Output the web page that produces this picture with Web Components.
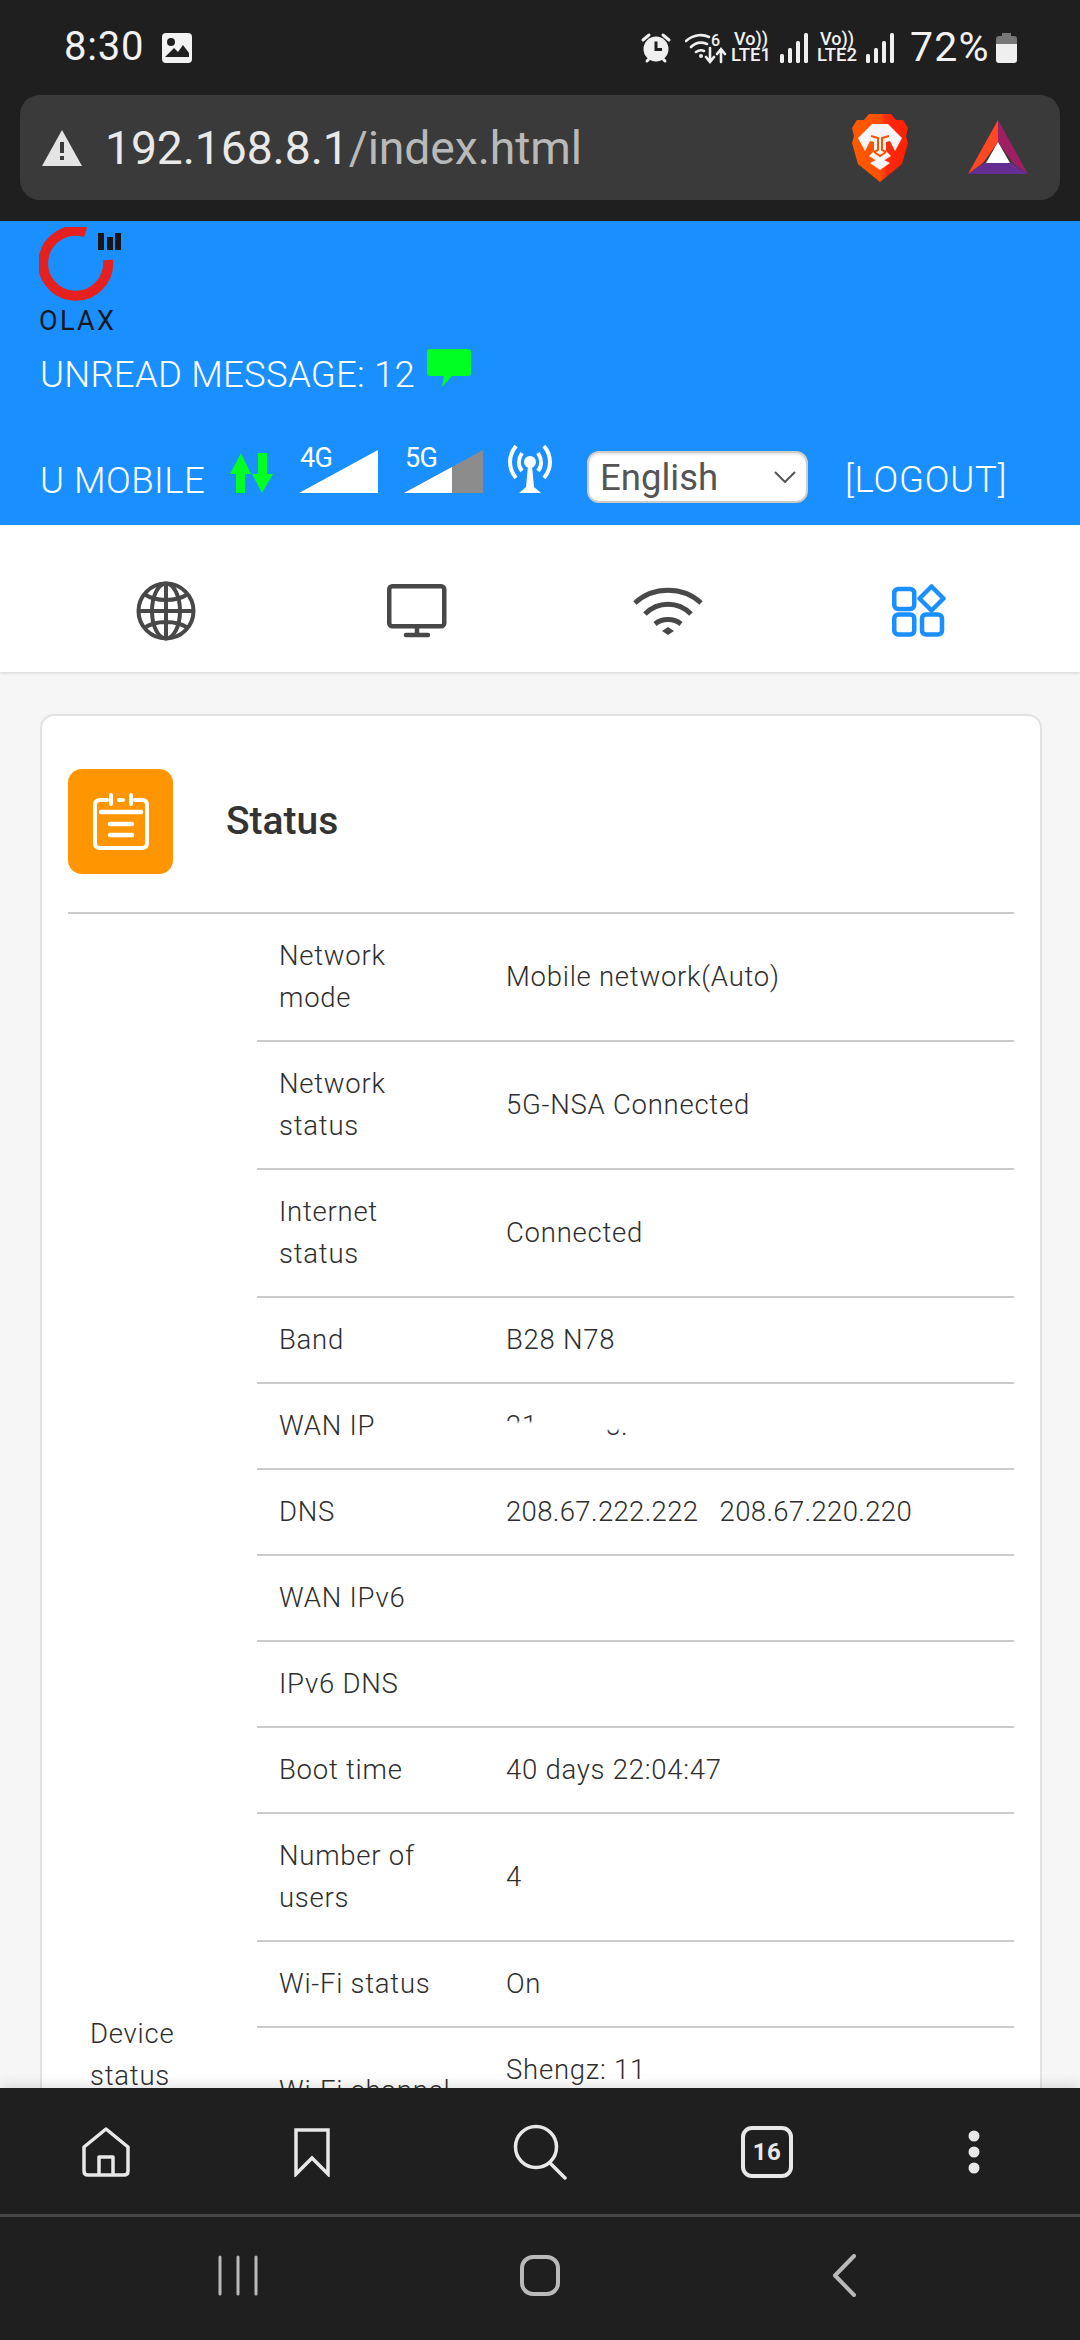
<!DOCTYPE html>
<html lang="en"><head><meta charset="utf-8"><title>Status</title>
<style>
html,body{margin:0;padding:0;width:1080px;height:2340px;overflow:hidden;background:#1f1f1f;font-family:Roboto,"Liberation Sans",sans-serif}
</style></head><body>
<app-shell>
  <browser-chrome></browser-chrome>
  <router-header></router-header>
  <tab-nav></tab-nav>
  <page-body>
    <status-card heading="Status"></status-card>
  </page-body>
  <browser-toolbar></browser-toolbar>
  <android-nav></android-nav>
</app-shell>
<script>
function el(name,html){customElements.define(name,class extends HTMLElement{constructor(){super();this.attachShadow({mode:'open'}).innerHTML=html}})}
el('app-shell','<style>:host{display:flex;flex-direction:column;width:1080px;height:2340px;overflow:hidden}</style><slot></slot>');

el('browser-chrome',`<style>
:host{display:block;height:221px;background:#1f1f1f;color:#f2f2f2;box-sizing:border-box;padding:0 20px;flex:none}
.status{display:flex;align-items:center;height:95px;box-sizing:border-box;padding:0 43px 0 44px}
.time{font-size:40px;letter-spacing:.8px;line-height:46px;margin-top:-2px;font-weight:400;width:98px}
.sp{flex:1}
svg{display:block;flex:none}
.lte{display:flex;flex-direction:column;align-items:center;font-size:18px;line-height:16px;width:38px;font-weight:500;margin-top:-1px}
.lte b{font-weight:500;font-size:18.500px;line-height:17px;white-space:nowrap}
.pct{font-size:41px;font-weight:400;line-height:46px;margin-left:16px;letter-spacing:1.2px;width:78px;white-space:nowrap;margin-top:-2px}
.url{display:flex;align-items:center;height:105px;background:#3a3a3a;border-radius:20px;padding:0 32px 0 22px}
.host{font-size:46.300px;color:#e9e9e9;margin-left:23px;letter-spacing:-.1px;line-height:50px}
.host span{color:#b9b9b9}
</style>
<div class="status">
  <span class="time">8:30</span>
  <svg width="30" height="30" viewBox="0 0 30 30"><rect width="30" height="30" rx="4" fill="#f2f2f2"/><circle cx="9" cy="9" r="4" fill="#1f1f1f"/><path d="M3 24 L12 15 L16 19 L21 12 L27 20 V24 Z" fill="#1f1f1f"/></svg>
  <span class="sp"></span>
  <svg width="32" height="32" viewBox="0 0 32 32"><path d="M3 8 9 3M29 8l-6-5M7 29l3-3M25 29l-3-3" stroke="#efefef" stroke-width="3" fill="none" stroke-linecap="round"/><circle cx="16" cy="17" r="12.500" fill="#efefef"/><path d="M16 9.500v8h6" stroke="#1f1f1f" stroke-width="3" fill="none"/></svg>
  <svg style="margin-left:13px" width="42" height="32" viewBox="0 0 42 32" fill="none" stroke="#efefef" stroke-linecap="round"><path d="M1 9C9 2 18 2 24 5M6 15C11 10 17 10 22 12M11 20c3-2 6-2 8-1" stroke-width="2.600"/><circle cx="16" cy="24" r="2" fill="#efefef" stroke="none"/><path d="M25 16v14m-4-5 4 5 4-5M36 30V17m-4 5 4-5 4 5" stroke-width="2.600"/><text x="26" y="14" font-size="16" font-weight="500" fill="#efefef" stroke="none" font-family="Roboto">6</text></svg>
  <span class="lte" style="margin-left:5px"><span>Vo))</span><b>LTE1</b></span>
  <svg style="margin-left:10px" width="28" height="30" viewBox="0 0 28 30" fill="#efefef"><rect x="0" y="21" width="4" height="9" rx="1.500"/><rect x="8" y="15" width="4" height="15" rx="1.500"/><rect x="16" y="8" width="4" height="22" rx="1.500"/><rect x="24" y="0" width="4" height="30" rx="1.500"/></svg>
  <span class="lte" style="margin-left:8px;width:42px"><span>Vo))</span><b>LTE2</b></span>
  <svg style="margin-left:8px" width="28" height="30" viewBox="0 0 28 30" fill="#efefef"><rect x="0" y="21" width="4" height="9" rx="1.500"/><rect x="8" y="15" width="4" height="15" rx="1.500"/><rect x="16" y="8" width="4" height="22" rx="1.500"/><rect x="24" y="0" width="4" height="30" rx="1.500"/></svg>
  <span class="pct">72%</span>
  <svg style="margin-left:8px" width="21" height="30" viewBox="0 0 21 30"><path d="M6 0h9v3h3q3 0 3 3v5H0V6q0-3 3-3h3z" fill="#777"/><path d="M0 11h21v16q0 3-3 3H3q-3 0-3-3z" fill="#efefef"/></svg>
</div>
<div class="url">
  <svg width="40" height="36" viewBox="0 0 40 36"><path d="M20 0 40 36H0Z" fill="#e4e4e4"/><rect x="18" y="12" width="4" height="11" fill="#3a3a3a"/><rect x="18" y="26" width="4" height="4" fill="#3a3a3a"/></svg>
  <span class="host">192.168.8.1<span>/index.html</span></span>
  <span class="sp"></span>
  <svg width="56" height="68" viewBox="0 0 56 68"><defs><linearGradient id="lg" x1="0" x2="1" y1="0" y2="0"><stop offset="0" stop-color="#ff5a00"/><stop offset=".5" stop-color="#ff5000"/><stop offset=".62" stop-color="#ff2a10"/><stop offset="1" stop-color="#ff2000"/></linearGradient></defs>
    <path d="M17 0H39L44 6H51L56 14 54 22 56 29 50 50 28 68 6 50 0 29 2 22 0 14 5 6H12Z" fill="url(#lg)"/>
    <path d="M20 10H36L50 24 43 37 38 27 34 28 34 37 39 42 28 49 17 42 22 37 22 28 18 27 13 37 6 24Z" fill="#f6f6f6"/>
    <path d="M19 22 26 24 26 36 22 38M37 22 30 24 30 36 34 38M22 38 28 42 34 38" fill="none" stroke="#ff5000" stroke-width="2"/>
    <path d="M18 49 28 44 38 49 28 56Z" fill="#f6f6f6"/>
  </svg>
  <svg style="margin-left:60px" width="60" height="55" viewBox="0 0 60 55"><path d="M30 0 60 54 45 43 30 22Z" fill="#9e1f63"/><path d="M30 0 0 54 15 43 30 22Z" fill="#ff4724"/><path d="M0 54H60L42 42H18Z" fill="#662d91"/><path d="M30 22 42 43H18Z" fill="#fff"/></svg>
</div>`);

el('router-header',`<style>
:host{display:block;height:304px;background:#1a8fff;color:#fff;box-sizing:border-box;padding:6px 0 0 39px;flex:none;font-size:36.500px;font-weight:300}
svg{display:block;flex:none}
.brand{display:block;height:107px;width:90px;position:relative}
.word{display:block;font-size:27px;line-height:26px;color:#17171c;width:80px;letter-spacing:2.300px;font-weight:400;margin-top:1px}
.msg{display:flex;align-items:flex-start;height:56px;margin-top:9px;padding-left:1px}
.msg span{line-height:44px;margin-top:10px;letter-spacing:.25px;white-space:nowrap}
.msg svg{margin:6px 0 0 12px}
.bar{display:flex;align-items:flex-end;margin-top:35px;padding-left:1px;height:62px;position:relative}
.u{line-height:40px;margin-bottom:-5px;letter-spacing:.5px;width:164px;white-space:nowrap}
.sig{position:relative;width:79px;height:43px;margin-left:26px;margin-bottom:3px}
.sig b{position:absolute;left:1px;top:-6px;font-size:27px;line-height:28px;font-weight:400;letter-spacing:-.6px}
.sel{display:flex;align-items:center;justify-content:space-between;width:221px;height:52px;box-sizing:border-box;background:#fff;border:2px solid #ccc;border-radius:12px;box-shadow:inset 0 2px 2px #e8e8e8;margin-left:35px;padding:0 10px 0 11px;color:#555;font-size:36.500px;font-weight:400;margin-bottom:-7px}
.lo{line-height:40px;margin-left:37px;letter-spacing:.8px;margin-bottom:-4px;white-space:nowrap}
</style>
<div class="brand"><svg width="84" height="80" viewBox="0 0 84 80"><path d="M46.600 5.300A32.500 32.500 0 1 0 69 33" fill="none" stroke="#e5201e" stroke-width="10"/><g fill="#1a1414"><rect x="59" y="6" width="6" height="17"/><rect x="68" y="10" width="6" height="13"/><rect x="76" y="6" width="6" height="17"/></g></svg><span class="word">OLAX</span></div>
<div class="msg"><span>UNREAD MESSAGE: 12</span><svg width="44" height="38" viewBox="0 0 44 38"><path d="M3 0H41q3 0 3 3V24q0 3-3 3H25L15 38 17 27H3q-3 0-3-3V3q0-3 3-3Z" fill="#00ff22"/></svg></div>
<div class="bar">
  <span class="u">U MOBILE</span>
  <svg style="margin-left:26px;margin-bottom:3px" width="43" height="40" viewBox="0 0 43 40" fill="#00ff22"><path d="M11 0 21 21H15V40H6V21H0Z"/><path d="M32 40 22 21H28V0H37V21H43Z"/></svg>
  <div class="sig" style="margin-left:26px"><svg width="79" height="43" viewBox="0 0 79 43"><path d="M0 43 79 0V43Z" fill="#fff"/></svg><b>4G</b></div>
  <div class="sig"><svg width="79" height="43" viewBox="0 0 79 43"><path d="M0 43 79 0V43Z" fill="#8c8c8c"/><path d="M0 43 48 17V43Z" fill="#fff"/></svg><b>5G</b></div>
  <svg style="margin-left:25px;margin-bottom:3px" width="44" height="49" viewBox="0 0 44 49" fill="none" stroke="#fff" stroke-width="4"><path d="M8 2C0 12 0 24 8 34M36 2C44 12 44 24 36 34M14 9C10 15 10 22 14 27M30 9C34 15 34 22 30 27"/><circle cx="22" cy="18" r="6" fill="#fff" stroke="none"/><path d="M20 22H24L26 43 33 49H11L18 43Z" fill="#fff" stroke="none"/></svg>
  <div class="sel"><span>English</span><svg width="22" height="12" viewBox="0 0 22 12"><path d="M1 1 11 11 21 1" fill="none" stroke="#555" stroke-width="2"/></svg></div>
  <span class="lo">[LOGOUT]</span>
</div>`);

el('tab-nav',`<style>
:host{display:block;position:relative;z-index:1;flex:none;height:147px;background:#fff;box-shadow:0 1px 3px rgba(0,0,0,.14)}
.r{display:grid;grid-template-columns:repeat(4,251px);justify-items:center;align-items:center;height:100%;box-sizing:border-box;padding:24px 0 0 40px}
svg{display:block}
</style><div class="r">
<svg width="60" height="60" viewBox="0 0 60 60" fill="none" stroke="#484848" stroke-width="4"><circle cx="30" cy="30" r="27.500"/><ellipse cx="30" cy="30" rx="14" ry="27.500"/><path d="M30 2.500V57.500M2.500 30H57.500M8 13C20 21 40 21 52 13M8 47C20 39 40 39 52 47"/></svg>
<svg width="60" height="54" viewBox="0 0 60 54" fill="none" stroke="#484848" stroke-width="4.500" stroke-linejoin="round" stroke-linecap="round"><rect x="2.250" y="2.250" width="55" height="40" rx="3"/><path d="M30 43V50M19 51H41"/></svg>
<svg width="70" height="48" viewBox="0 0 70 48" fill="none" stroke="#484848" stroke-width="5"><path d="M2 16C20-1 50-1 68 16M12 27C25 14 45 14 58 27M22 37C29 31 41 31 48 37"/><path d="M29 44 35 40 41 44 35 48Z" fill="#484848" stroke="none"/></svg>
<svg width="54" height="54" viewBox="0 0 54 54" fill="none" stroke="#1a8fff" stroke-width="4.500" stroke-linejoin="round"><rect x="2.250" y="5" width="20" height="20" rx="4"/><rect x="2.250" y="30.500" width="20" height="20" rx="4"/><rect x="30" y="30.500" width="20" height="20" rx="4"/><path d="M39.500 2.500 51.500 14.500 39.500 26.500 27.500 14.500Z"/></svg>
</div>`);

el('page-body',`<style>:host{display:block;position:relative;flex:1 1 0;min-height:0;overflow:hidden;background:#f6f6f6;padding:42px 38px 0 40px;box-sizing:border-box}</style><slot></slot>`);

customElements.define('status-card',class extends HTMLElement{constructor(){super();
const rows=[['Network<br>mode','Mobile network(Auto)'],['Network<br>status','5G-NSA Connected'],['Internet<br>status','Connected'],['Band','B28 N78'],['WAN IP','<span class="red">21.&nbsp;&nbsp;&nbsp;&nbsp;&nbsp;&nbsp;&nbsp;&nbsp;5.<i></i><u></u></span>'],['DNS','<span class="num">208.67.222.222 &nbsp; 208.67.220.220</span>'],['WAN IPv6',''],['IPv6 DNS',''],['Boot time','40 days 22:04:47'],['Number of<br>users','4'],['Wi-Fi status','On'],['Wi-Fi channel','Shengz: 11<br>&nbsp;']];
const tr=rows.map((r,i)=>`<tr>${i==0?`<th rowspan="${rows.length+1}">Device<br>status</th>`:''}<td class="k">${r[0]}</td><td class="v">${r[1]}</td></tr>`).join('');
this.attachShadow({mode:'open'}).innerHTML=`<style>
:host{display:block;background:#fff;border:2px solid #e2e2e2;border-radius:14px;padding:53px 26px 0 26px;color:#2e2e2e}
.t{display:flex;align-items:center;height:105px;padding-bottom:38px;border-bottom:2px solid #ccc}
.ic{width:105px;height:105px;border-radius:14px;background:#ff9500;display:flex;align-items:center;justify-content:center}
h2{margin:0 0 2px 53px;font-size:39px;font-weight:500;line-height:44px;color:#333}
table{border-collapse:collapse;width:946px;font-size:27.500px;letter-spacing:.75px;table-layout:fixed;font-weight:300}
th{box-sizing:border-box;font-weight:300;text-align:left;padding:0 0 0 22px;line-height:42px;vertical-align:middle}
td{padding:21px 22px;line-height:42px;border-bottom:2px solid #ccc;vertical-align:middle}
.k{box-sizing:border-box}
.f td{height:1039px;padding:0}
.num{letter-spacing:.35px}
.red{position:relative;display:inline-block;white-space:nowrap}
.red i,.red u{position:absolute;background:#fff;filter:blur(1px)}
.red i{left:-3px;top:17px;width:90px;height:25px}
.red u{left:36px;top:0;width:90px;height:25px}
</style>
<div class="t"><div class="ic"><svg width="58" height="58" viewBox="0 0 58 58" fill="none" stroke="#fff" stroke-width="4" stroke-linecap="round"><path d="M15 7H8Q3 7 3 12V50Q3 55 8 55H50Q55 55 55 50V12Q55 7 50 7H43M19 2V11M39 2V11M27 7H31"/><path d="M9 19H49M18 31H40M18 42H40" stroke-width="4.500"/></svg></div><h2>${this.getAttribute('heading')}</h2></div>
<table><colgroup><col style="width:189px"><col style="width:227px"><col></colgroup>${tr}<tr class="f"><td></td><td></td></tr></table>`}});

el('browser-toolbar',`<style>
:host{display:block;position:relative;z-index:2;flex:none;height:126px;background:#1f1f1f;box-shadow:0 -3px 12px rgba(0,0,0,.12);color:#e8e8e8}
.r{display:flex;height:100%;align-items:center;padding:2px 0 0 81px;box-sizing:border-box}
svg{display:block;flex:none}
.tab{flex:none;width:52px;height:52px;margin-left:174px;border:4px solid #e8e8e8;border-radius:11px;box-sizing:border-box;display:flex;align-items:center;justify-content:center;font-size:24px;font-weight:700;letter-spacing:.5px}
</style><div class="r">
<svg width="50" height="50" viewBox="0 0 50 50" fill="none" stroke="#e8e8e8" stroke-width="3.500" stroke-linejoin="round"><path d="M3 20 25 2 47 20V44Q47 48 43 48H7Q3 48 3 44Z"/><path d="M18 48V30H32V48"/></svg>
<svg style="margin-left:163px" width="36" height="50" viewBox="0 0 36 50" fill="none" stroke="#e8e8e8" stroke-width="3.500"><path d="M2 3H34V47L18 31 2 47Z"/></svg>
<svg style="margin-left:183px" width="54" height="56" viewBox="0 0 54 56" fill="none" stroke="#e8e8e8" stroke-width="3.500" stroke-linecap="round"><circle cx="23" cy="23" r="20.500"/><path d="M37 39 52 54"/></svg>
<div class="tab">16</div>
<svg style="margin-left:175px" width="12" height="44" viewBox="0 0 12 44" fill="#e8e8e8"><circle cx="6" cy="6" r="5.500"/><circle cx="6" cy="22" r="5.500"/><circle cx="6" cy="38" r="5.500"/></svg>
</div>`);

el('android-nav',`<style>
:host{display:block;flex:none;height:126px;background:#1f1f1f;border-top:3px solid #484848;box-sizing:border-box}
.r{display:flex;align-items:center;height:100%;padding:0 0 7px 218px;box-sizing:border-box}
svg{display:block;flex:none}
</style><div class="r">
<svg width="40" height="41" viewBox="0 0 40 41" stroke="#b9b9b9" stroke-width="3" stroke-linecap="round"><path d="M2 2V39M20 2V39M38 2V39"/></svg>
<svg style="margin-left:262px" width="40" height="41" viewBox="0 0 40 41" fill="none" stroke="#b9b9b9" stroke-width="4"><rect x="2" y="2" width="36" height="37" rx="11"/></svg>
<svg style="margin-left:272px" width="24" height="43" viewBox="0 0 24 43" fill="none" stroke="#b9b9b9" stroke-width="4" stroke-linecap="round" stroke-linejoin="round"><path d="M22 2 3 21.500 22 41"/></svg>
</div>`);
</script>
</body></html>
